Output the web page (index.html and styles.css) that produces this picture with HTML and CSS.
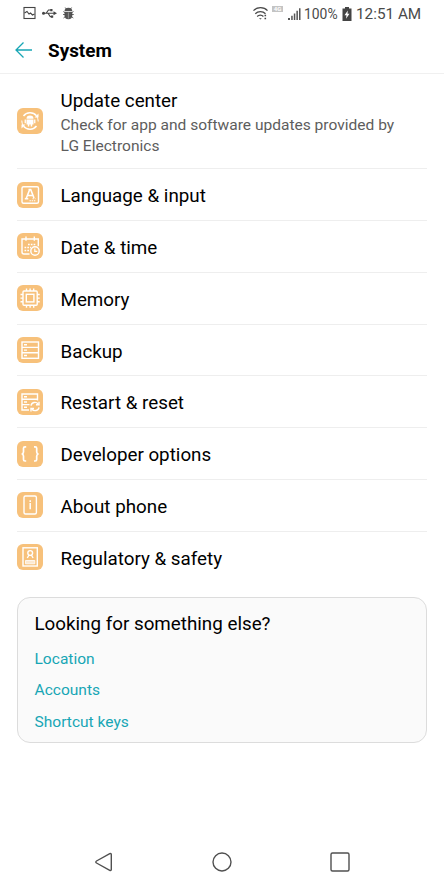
FILE: index.html
```
<!DOCTYPE html>
<html lang="en">
<head>
<meta charset="utf-8">
<title>System</title>
<link rel="stylesheet" href="styles.css">
</head>
<body>
<div class="screen">
  <div class="status">
    <svg class="notifications" viewBox="0 0 56 18" fill="none" stroke="#444" stroke-width="1.1">
      <rect x="2" y="2.500" width="11" height="11"/>
      <path d="M2.500 8l2.500-1.500 2 2.500 1.500-1 2 2 2-1"/>
      <path d="M21 8.300h12M24 8.300l2.500-3.300h3M26 8.300l2.300 3.300h2"/>
      <circle cx="21.500" cy="8.300" r="1.500" fill="#444" stroke="none"/>
      <path d="M31.500 6.300l3.500 2-3.500 2zM28.300 4h2.200v2.200h-2.200zM29 10.500h2.200v2.200h-2.200z" fill="#444" stroke="none"/>
      <path d="M42.500 6.300a3.900 3.500 0 0 1 7.800 0zM42.500 7.100h7.800v3.500a3.900 3.600 0 0 1-7.800 0z" fill="#555" stroke="none"/>
      <path d="M43.200 2.500l1.300 1.800M49.600 2.500l-1.300 1.800M41.300 6.500l2 1.300M51.500 6.500l-2 1.300M41 9.500h2.500M51.800 9.500h-2.500M41.500 13l2-1.500M51.300 13l-2-1.500" stroke-width=".8"/>
      <path d="M46.400 7.500v6" stroke="#bbb" stroke-width=".6"/>
    </svg>
    <div class="indicators">
      <svg class="wifi" viewBox="0 0 18 18" fill="none" stroke="#484848" stroke-width="1.250">
        <path d="M1.500 7.700C5 3.700 12 3.700 15.500 7.700M3.300 10.700c2.700-2.900 7.500-2.900 10.200 0M5.200 13.500c1.700-1.800 4.500-1.800 6.200 0"/>
        <path d="M7 15.200h2.800l-1.400 1.300zM12.500 11.800h1.600v1.500h-1.600zM12.500 14.800h1.600v1.500h-1.600z" fill="#484848" stroke="none"/>
      </svg>
      <span class="lte">4G</span>
      <svg class="signal" viewBox="0 0 14 14" fill="#555"><path d="M0 11h2v2H0zM3.200 8.800h1.500V13H3.200zM5.800 6.500h1.500V13H5.800zM8.400 3.800h1.500V13H8.400zM11 1.200h1.500V13H11z"/></svg>
      <span class="percent">100%</span>
      <svg class="battery" viewBox="0 0 10 14"><path fill="#444" d="M3 0h4v1.500h2.500V14H.5V1.500H3z"/><path fill="#fff" d="M5.800 3.500L2.500 8.200h2l-.5 3.500 3.500-4.900h-2z"/></svg>
      <span class="clock">12:51 AM</span>
    </div>
  </div>
  <header class="header">
    <svg class="back" viewBox="0 0 18 18" fill="none" stroke="#17a6b5" stroke-width="1.300"><path d="M17 9H1.500M8.500 1.500L1 9l7.500 7.500"/></svg>
    <h1 class="title">System</h1>
  </header>
  <main class="list">
    <div class="row row-tall">
      <svg class="icon" viewBox="0 0 26 26">
        <g fill="none" stroke="#fff" stroke-width="1.500"><path d="M6.500 8C9.500 4 16 3.700 19.500 7.700M19.500 18c-3 4-9.500 4.300-13 .3"/><path d="M4.800 12.500c0 2 .5 3.500 1.200 4.700M21.200 13.500c0-2-.5-3.500-1.200-4.700" stroke-width="1"/></g>
        <path fill="#fff" d="M21.500 5.500v4h-4zM4.500 20.500v-4h4zM9.500 10.800a3.500 3.300 0 0 1 7 0zM9.500 11.400h7v5h-1.300v2h-1.500v-2h-1.400v2h-1.500v-2H9.500zM7.600 11.400h1.300v3.800H7.600zM17.100 11.400h1.300v3.800h-1.300z"/>
      </svg>
      <div class="text">
        <div class="label">Update center</div>
        <div class="summary">Check for app and software updates provided by<br>LG Electronics</div>
      </div>
    </div>
    <div class="row">
      <svg class="icon" viewBox="0 0 26 26" fill="none" stroke="#fff" stroke-width="1.400">
        <rect x="5" y="4.700" width="16.500" height="16.500" rx="1.500"/>
        <path d="M9.200 16.500l3.500-9h1L17 16M10.300 13.500h5.500M7.800 16.800h3.500M11.500 7.500h2.500" stroke-width="1.600"/>
        <path d="M12.500 18.700h6M15.500 16.700h3" stroke-width="1.100" stroke-dasharray="1.400 .8"/>
      </svg>
      <div class="label">Language &amp; input</div>
    </div>
    <div class="row">
      <svg class="icon" viewBox="0 0 26 26" fill="none" stroke="#fff" stroke-width="1.400">
        <path d="M12.500 21H7a2 2 0 0 1-2-2V6h16.300v7.300M9 3.500v4.200M17.300 3.500v4.200"/>
        <path d="M11 11.500h7.500M7.500 14.500h6.500M7.500 17.500h4.500" stroke-width="1.600" stroke-dasharray="1.700 1.100"/>
        <circle cx="18" cy="18" r="4.200"/><path d="M17.800 15.500v2.800h2.500" stroke-width="1.200"/>
      </svg>
      <div class="label">Date &amp; time</div>
    </div>
    <div class="row">
      <svg class="icon" viewBox="0 0 26 26" fill="none" stroke="#fff" stroke-width="1.400">
        <rect x="6" y="6" width="14.200" height="14.200" rx="1"/><rect x="9.300" y="9.300" width="7.600" height="7.600"/>
        <path d="M9.500 3.500V6M13.100 3.500V6M16.700 3.500V6M9.500 20.200v2.500M13.100 20.200v2.500M16.700 20.200v2.500M3.500 9.500H6M3.500 13.100H6M3.500 16.700H6M20.200 9.500h2.500M20.200 13.100h2.500M20.200 16.700h2.500"/>
      </svg>
      <div class="label">Memory</div>
    </div>
    <div class="row">
      <svg class="icon" viewBox="0 0 26 26" fill="none" stroke="#fff" stroke-width="1.400">
        <rect x="5" y="5" width="16.500" height="16.300"/><path d="M5 10.400h16.500M5 15.800h16.500M7 7.800h3M7 13.100h3M7 18.500h3"/>
      </svg>
      <div class="label">Backup</div>
    </div>
    <div class="row">
      <svg class="icon" viewBox="0 0 26 26" fill="none" stroke="#fff" stroke-width="1.400">
        <path d="M12 21H5V5h15.500v6.500M5 10.300h15.500M5 15.600h7.500M7 7.700h3M7 13h3M7 18.300h3"/>
        <path d="M14 16.700c.5-3.500 5-4.500 7.200-1.700M22 18.300c-.5 3.500-5 4.500-7.200 1.700"/><path d="M22 12.800v3h-3M14 22.500v-3h3"/>
      </svg>
      <div class="label">Restart &amp; reset</div>
    </div>
    <div class="row">
      <svg class="icon" viewBox="0 0 26 26" fill="none" stroke="#fff" stroke-width="1.700">
        <path d="M9.200 5.800H8c-1 0-1.500.6-1.500 1.500V11c0 1-.5 1.700-1.700 2 1.200.3 1.700 1 1.700 2v3.500c0 1 .5 1.500 1.500 1.500h1.200M17 5.800h1.200c1 0 1.500.6 1.500 1.500V11c0 1 .5 1.700 1.700 2-1.200.3-1.700 1-1.700 2v3.500c0 1-.5 1.500-1.500 1.500H17"/>
      </svg>
      <div class="label">Developer options</div>
    </div>
    <div class="row">
      <svg class="icon" viewBox="0 0 26 26" fill="none" stroke="#fff" stroke-width="1.400">
        <rect x="7" y="4" width="12.400" height="18" rx="1.500"/><path d="M13.200 11v6.300M13.200 8.300v1.600" stroke-width="1.500"/>
      </svg>
      <div class="label">About phone</div>
    </div>
    <div class="row">
      <svg class="icon" viewBox="0 0 26 26" fill="none" stroke="#fff" stroke-width="1.400">
        <rect x="6" y="3.800" width="14.300" height="18.200"/><circle cx="13.200" cy="9" r="2.400"/><path d="M12 11l-1.700 3M14.400 11l1.700 3"/><path d="M8.500 16.500h9.300v3.300H8.500z" fill="#fff" fill-opacity=".65" stroke-width=".8"/>
      </svg>
      <div class="label">Regulatory &amp; safety</div>
    </div>
  </main>
  <section class="card">
    <h2 class="card-title">Looking for something else?</h2>
    <a class="link">Location</a>
    <a class="link">Accounts</a>
    <a class="link">Shortcut keys</a>
  </section>
  <nav class="nav">
    <svg viewBox="0 0 22 22"><path d="M18.300 3.500v15c0 1-.8 1.200-1.500.8L3.500 12c-.9-.5-.9-1.500 0-2L16.800 2.700c.7-.4 1.500-.1 1.500.8z"/></svg>
    <svg viewBox="0 0 22 22"><circle cx="11" cy="11" r="9"/></svg>
    <svg viewBox="0 0 22 22"><rect x="2" y="2" width="18" height="18" rx="1.500"/></svg>
  </nav>
</div>
</body>
</html>
```
FILE: styles.css
```
* { box-sizing: border-box; }
body { margin: 0; background: #fff; color: #000; font-family: Roboto, "Liberation Sans", sans-serif; }
.screen { width: 444px; height: 888px; display: flex; flex-direction: column; overflow: hidden; }
.status { height: 27px; display: flex; justify-content: space-between; padding: 0 23px 0 22px; flex: none; }
.notifications { width: 56px; height: 18px; margin-top: 5px; }
.indicators { display: flex; align-items: center; color: #4a4a4a; white-space: nowrap; }
.wifi { width: 18px; height: 18px; margin-top: -3px; }
.lte { width: 11px; height: 6px; margin: -9px 5px 0 2px; background: #c4c4c4; color: #fff; font-size: 6px; line-height: 6px; font-weight: 700; text-align: center; }
.signal { width: 14px; height: 14px; margin-right: 2px; }
.percent { width: 35px; font-size: 13.900px; }
.battery { width: 10px; height: 14px; margin: 0 4px 0 3px; }
.clock { width: 65px; font-size: 15.300px; }
.header { height: 47px; flex: none; border-bottom: 1px solid #f0f0f0; display: flex; align-items: center; padding: 0 15px; gap: 15px; }
.back { width: 18px; height: 18px; }
.title { margin: 0; padding-top: 2px; font-size: 18.900px; line-height: 24px; font-weight: 700; }
.list { padding: 0 17px; flex: none; }
.row { height: 51.800px; display: flex; align-items: center; gap: 17.500px; border-bottom: 1px solid #eee; }
.row:last-child { border-bottom-color: transparent; }
.row-tall { height: 95.300px; }
.icon { width: 26px; height: 26px; border-radius: 6px; background: #f7c17b; flex: none; }
.label { font-size: 18.800px; line-height: 24px; padding-top: 3px; }
.summary { font-size: 15.550px; line-height: 20.500px; color: #5d5d5d; white-space: nowrap; margin-top: 2px; }
.card { height: 146px; margin: 13px 17px 0; border: 1px solid #dcdcdc; border-radius: 13px; background: #fafafa; padding: 14.500px 17px 0 16.500px; display: flex; flex-direction: column; flex: none; }
.card-title { margin: 0 0 7px; font-size: 18.800px; line-height: 25px; font-weight: 400; }
.link { font-size: 15.550px; line-height: 31.200px; color: #17a6b5; }
.nav { margin-top: auto; height: 52px; display: flex; justify-content: space-between; align-items: center; padding: 0 93px; }
.nav svg { width: 22px; height: 22px; fill: none; stroke: #505050; stroke-width: 1.400; }
```
